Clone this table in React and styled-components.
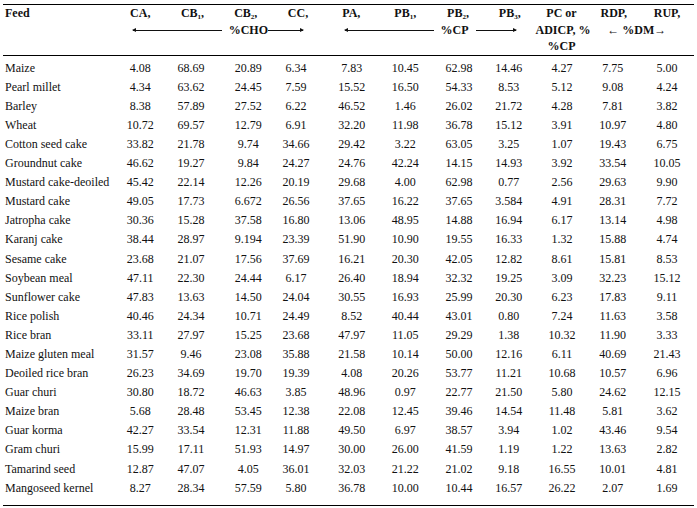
import React from "react";
import styled, { createGlobalStyle } from "styled-components";

const GlobalStyle = createGlobalStyle`
  html, body {
    margin: 0;
    padding: 0;
    background: #fff;
  }
  body {
    font-family: "Liberation Serif", "Times New Roman", serif;
    color: #111;
  }
`;

const COLS =
  "112px 50.5px 54px 52.5px 52px 54.5px 53.5px 52px 51.5px 52px 52.5px 54px";

const rows = [
  ["Maize", "4.08", "68.69", "20.89", "6.34", "7.83", "10.45", "62.98", "14.46", "4.27", "7.75", "5.00"],
  ["Pearl millet", "4.34", "63.62", "24.45", "7.59", "15.52", "16.50", "54.33", "8.53", "5.12", "9.08", "4.24"],
  ["Barley", "8.38", "57.89", "27.52", "6.22", "46.52", "1.46", "26.02", "21.72", "4.28", "7.81", "3.82"],
  ["Wheat", "10.72", "69.57", "12.79", "6.91", "32.20", "11.98", "36.78", "15.12", "3.91", "10.97", "4.80"],
  ["Cotton seed cake", "33.82", "21.78", "9.74", "34.66", "29.42", "3.22", "63.05", "3.25", "1.07", "19.43", "6.75"],
  ["Groundnut cake", "46.62", "19.27", "9.84", "24.27", "24.76", "42.24", "14.15", "14.93", "3.92", "33.54", "10.05"],
  ["Mustard cake-deoiled", "45.42", "22.14", "12.26", "20.19", "29.68", "4.00", "62.98", "0.77", "2.56", "29.63", "9.90"],
  ["Mustard cake", "49.05", "17.73", "6.672", "26.56", "37.65", "16.22", "37.65", "3.584", "4.91", "28.31", "7.72"],
  ["Jatropha cake", "30.36", "15.28", "37.58", "16.80", "13.06", "48.95", "14.88", "16.94", "6.17", "13.14", "4.98"],
  ["Karanj cake", "38.44", "28.97", "9.194", "23.39", "51.90", "10.90", "19.55", "16.33", "1.32", "15.88", "4.74"],
  ["Sesame cake", "23.68", "21.07", "17.56", "37.69", "16.21", "20.30", "42.05", "12.82", "8.61", "15.81", "8.53"],
  ["Soybean meal", "47.11", "22.30", "24.44", "6.17", "26.40", "18.94", "32.32", "19.25", "3.09", "32.23", "15.12"],
  ["Sunflower cake", "47.83", "13.63", "14.50", "24.04", "30.55", "16.93", "25.99", "20.30", "6.23", "17.83", "9.11"],
  ["Rice polish", "40.46", "24.34", "10.71", "24.49", "8.52", "40.44", "43.01", "0.80", "7.24", "11.63", "3.58"],
  ["Rice bran", "33.11", "27.97", "15.25", "23.68", "47.97", "11.05", "29.29", "1.38", "10.32", "11.90", "3.33"],
  ["Maize gluten meal", "31.57", "9.46", "23.08", "35.88", "21.58", "10.14", "50.00", "12.16", "6.11", "40.69", "21.43"],
  ["Deoiled rice bran", "26.23", "34.69", "19.70", "19.39", "4.08", "20.26", "53.77", "11.21", "10.68", "10.57", "6.96"],
  ["Guar churi", "30.80", "18.72", "46.63", "3.85", "48.96", "0.97", "22.77", "21.50", "5.80", "24.62", "12.15"],
  ["Maize bran", "5.68", "28.48", "53.45", "12.38", "22.08", "12.45", "39.46", "14.54", "11.48", "5.81", "3.62"],
  ["Guar korma", "42.27", "33.54", "12.31", "11.88", "49.50", "6.97", "38.57", "3.94", "1.02", "43.46", "9.54"],
  ["Gram churi", "15.99", "17.11", "51.93", "14.97", "30.00", "26.00", "41.59", "1.19", "1.22", "13.63", "2.82"],
  ["Tamarind seed", "12.87", "47.07", "4.05", "36.01", "32.03", "21.22", "21.02", "9.18", "16.55", "10.01", "4.81"],
  ["Mangoseed kernel", "8.27", "28.34", "57.59", "5.80", "36.78", "10.00", "10.44", "16.57", "26.22", "2.07", "1.69"],
];

// small horizontal nudges so the printed column centres line up
const nudge = [0, 0, -1.5, 2.5, -2, 0.5, 0, 1, -1, 0.5, -1, 0];

const App = () => {
  return (
    <>
      <GlobalStyle />
      <Page>
        <Table>
          <Head>
            <HeadCell $col="1" $row="1" $align="left">Feed</HeadCell>
            <HeadCell $col="2" $row="1">CA,</HeadCell>
            <HeadCell $col="3" $row="1">CB<Sub>1</Sub>,</HeadCell>
            <HeadCell $col="4" $row="1">CB<Sub>2</Sub>,</HeadCell>
            <HeadCell $col="5" $row="1">CC,</HeadCell>
            <HeadCell $col="6" $row="1">PA,</HeadCell>
            <HeadCell $col="7" $row="1">PB<Sub>1</Sub>,</HeadCell>
            <HeadCell $col="8" $row="1">PB<Sub>2</Sub>,</HeadCell>
            <HeadCell $col="9" $row="1">PB<Sub>3</Sub>,</HeadCell>
            <HeadCell $col="10" $row="1">PC or</HeadCell>
            <HeadCell $col="11" $row="1">RDP,</HeadCell>
            <HeadCell $col="12" $row="1">RUP,</HeadCell>

            <Span $col="2 / 6" $left={18} $right={21}>
              <Arrow $dir="left" />
              <GroupLabel $gapL={7}>%CHO</GroupLabel>
              <Arrow $dir="right" $len={35} />
            </Span>
            <Span $col="6 / 10" $left={21} $right={20}>
              <Arrow $dir="left" />
              <GroupLabel $gapL={7} $gapR={7}>%CP</GroupLabel>
              <Arrow $dir="right" $len={40} />
            </Span>
            <HeadCell $col="10" $row="2">ADICP, %</HeadCell>
            <HeadCell $col="10" $row="3">%CP</HeadCell>
            <HeadCell $col="11 / 13" $row="2" $shift={-4}>
              ← %DM→
            </HeadCell>
          </Head>

          <Body>
            {rows.map((r) => (
              <Row key={r[0]}>
                {r.map((v, i) => (
                  <Cell key={i} $first={i === 0} $shift={nudge[i] || 0}>
                    {v}
                  </Cell>
                ))}
              </Row>
            ))}
          </Body>
        </Table>
      </Page>
    </>
  );
};

export default App;

const Page = styled.div`
  width: 697px;
  height: 508px;
  padding: 4px 0 0 3px;
  box-sizing: border-box;
  overflow: hidden;
`;

const Table = styled.div`
  width: 691px;
  border-top: 1.2px solid #000;
  border-bottom: 1.2px solid #000;
`;

const Head = styled.div`
  display: grid;
  grid-template-columns: ${COLS};
  grid-template-rows: repeat(3, 16.7px);
  border-bottom: 1.2px solid #000;
  font-weight: bold;
  font-size: 12px;
`;

const HeadCell = styled.div`
  grid-column: ${({ $col }) => $col};
  grid-row: ${({ $row }) => $row};
  text-align: ${({ $align }) => $align || "center"};
  padding-left: ${({ $align }) => ($align === "left" ? "2px" : "0")};
  line-height: 16.7px;
  white-space: nowrap;
  transform: translateX(${({ $shift }) => $shift || 0}px);
`;

const Sub = styled.sub`
  font-size: 7px;
  vertical-align: -2px;
  line-height: 0;
`;

const Span = styled.div`
  grid-column: ${({ $col }) => $col};
  grid-row: 2;
  display: flex;
  align-items: center;
  padding: 0 ${({ $right }) => $right}px 0 ${({ $left }) => $left}px;
`;

const GroupLabel = styled.span`
  line-height: 16.7px;
  white-space: nowrap;
  margin: 0 ${({ $gapR }) => $gapR || 0}px 0 ${({ $gapL }) => $gapL || 0}px;
`;

const Arrow = styled.span`
  position: relative;
  height: 1px;
  background: #111;
  flex: ${({ $len }) => ($len ? `0 0 ${$len}px` : "1 1 auto")};

  &::before {
    content: "";
    position: absolute;
    top: -1.5px;
    ${({ $dir }) => ($dir === "left" ? "left: -1px;" : "right: -1px;")}
    border-top: 2px solid transparent;
    border-bottom: 2px solid transparent;
    ${({ $dir }) =>
      $dir === "left"
        ? "border-right: 4px solid #111;"
        : "border-left: 4px solid #111;"}
  }
`;

const Body = styled.div`
  padding: 2.5px 0 7.5px;
`;

const Row = styled.div`
  display: grid;
  grid-template-columns: ${COLS};
  height: 19.1px;
  align-items: center;
  font-size: 12px;
`;

const Cell = styled.div`
  text-align: ${({ $first }) => ($first ? "left" : "center")};
  padding-left: ${({ $first }) => ($first ? "2px" : "0")};
  white-space: nowrap;
  transform: translateX(${({ $shift }) => $shift}px);
`;
